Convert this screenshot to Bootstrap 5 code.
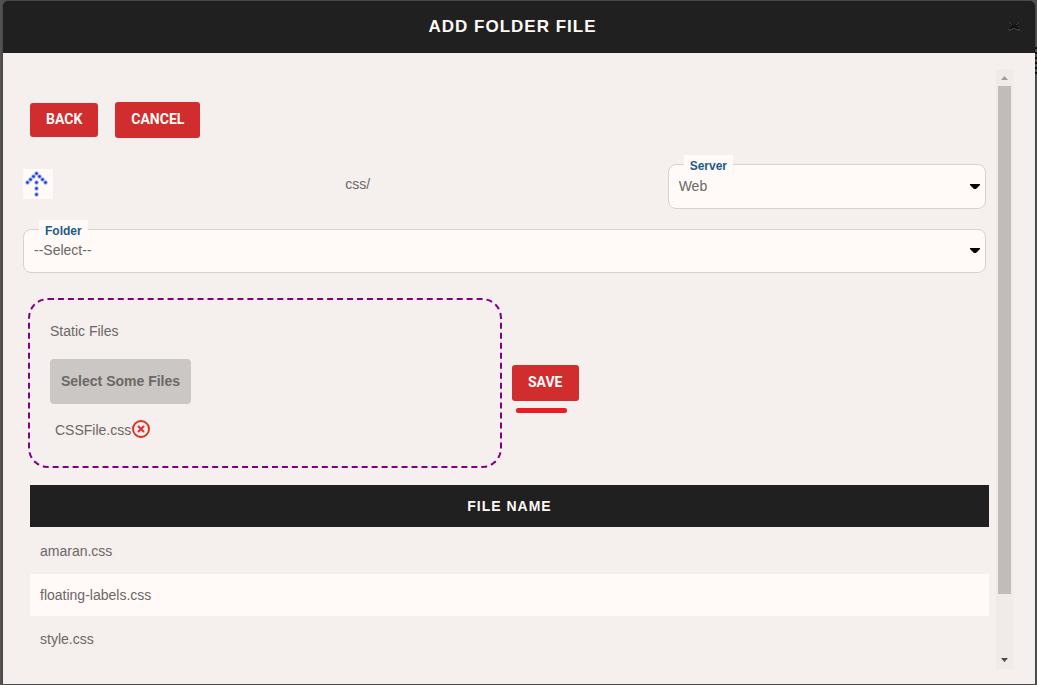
<!DOCTYPE html>
<html lang="en">
<head>
<meta charset="utf-8">
<meta name="viewport" content="width=device-width, initial-scale=1">
<title>Add Folder File</title>
<link href="https://cdn.jsdelivr.net/npm/bootstrap@5.3.0/dist/css/bootstrap.min.css" rel="stylesheet">
<style>
body{font-family:"Liberation Sans",Arial,sans-serif;font-size:14px;line-height:20px;color:#6b6766;background:#555352}
.page-shell{min-height:100vh;padding:1px 2px 1px 3px;background:repeating-linear-gradient(#111 0 2px,#555352 2px 5px) right 47px/2px 30px no-repeat,#555352}
.dialog-box{background:#f5efed;border-radius:4px 4px 0 0;box-shadow:0 0 2px rgba(0,0,0,.5)}
.dialog-head{background:#202020;color:#fffaf7;height:52px;padding-right:13px;border-radius:4px 4px 0 0}
.dialog-head h1{font-size:17px;line-height:20px;font-weight:700;letter-spacing:1px}
.close-btn{right:14px;top:18px;width:14px;height:16px}
.dialog-main{padding:16px 22px 15px 20px}
.scroll-pane{padding-right:10px}
.btn-action{--bs-btn-color:#fffaf7;--bs-btn-bg:#d12c2e;--bs-btn-hover-color:#fff;--bs-btn-hover-bg:#b52325;--bs-btn-border-width:0;--bs-btn-border-radius:3px;--bs-btn-font-size:14px;--bs-btn-font-weight:700;--bs-btn-line-height:20px;padding:7px 16px 9px;font-family:Roboto,sans-serif}
.btn-short{padding:6px 16px 8px}
.action-bar{padding:33px 7px 0;gap:17px}
.path-row{margin-top:26px}
.up-btn{width:30px;height:30px;background:#fffaf7;margin-top:5px}
.path-text{margin-top:10px}
.field-select{height:45px;padding:10px 30px 12px 10px;font-size:14px;line-height:20px;color:#6b6766;background:#fffaf7;border:1px solid #d8d3d1;border-radius:8px}
.folder-row .field-select{height:44px}
.folder-row .field-caret{top:19px}
.field-label{left:16px;top:-9px;padding:3px 6px 0;font-size:12px;line-height:16px;font-weight:700;color:#1d5a8a;background:#fffaf7}
.field-caret{right:6px;top:20px;width:10px;height:6px;pointer-events:none}
.folder-row{margin-top:20px}
.upload-row{margin-top:25px;padding-left:5px;gap:10px}
.drop-zone{width:calc(50% - 5px);height:170px;border:2px dashed purple;border-radius:20px;padding:21px 20px}
.btn-files{--bs-btn-color:#6b6766;--bs-btn-bg:#cbc7c4;--bs-btn-hover-bg:#bdb9b6;--bs-btn-border-width:0;--bs-btn-border-radius:4px;--bs-btn-padding-x:11px;--bs-btn-padding-y:12px;--bs-btn-font-size:14px;--bs-btn-font-weight:700;--bs-btn-line-height:21px;margin-top:18px}
.file-entry{margin-top:16px;padding-left:5px}
.save-mark{left:4px;top:43px;width:51px;height:5px;border-radius:2px;background:#ed1c24}
.file-table{width:calc(100% - 4px);margin:17px 0 0 7px;border-collapse:separate;border-spacing:0}
.file-table th{height:42px;background:#202020;color:#fffaf7;text-align:center;letter-spacing:1px}
.file-table td{height:44px;padding:0 10px;border-top:2px solid #f5efed}
.file-table tbody tr:nth-child(even) td{background:#fffaf7}
.file-table tbody tr:first-child td{height:45px}
.scroll-track{width:17px;background:#f0ebe8}
.scroll-thumb{width:13px;flex:0 0 508px;background:#c1bcb9}
.scroll-arrow{height:17px;width:17px}
</style>
</head>
<body>
<div class="page-shell d-flex flex-column">
<div class="dialog-box flex-grow-1 d-flex flex-column" role="dialog" aria-labelledby="dialogTitle">
  <header class="dialog-head position-relative d-flex align-items-center justify-content-center">
    <h1 class="m-0 text-uppercase" id="dialogTitle">Add Folder File</h1>
    <button type="button" class="close-btn position-absolute border-0 bg-transparent p-0 d-flex" aria-label="Close">
      <svg width="14" height="16" viewBox="0 0 14 16" fill="none"><path d="M3 4l3 3h2l3-3M3 10l3-2h2l3 2" stroke="#111" stroke-width="2"/><path d="M2 3l3 3M12 3L9 6M1 10l1 1h2l3-2 3 2h2l1-1" stroke="#484848" stroke-width="1"/></svg>
    </button>
  </header>
  <div class="dialog-main flex-grow-1 d-flex">
    <main class="scroll-pane flex-grow-1">
      <div class="action-bar d-flex align-items-center">
        <button type="button" class="btn btn-action btn-short">BACK</button>
        <button type="button" class="btn btn-action">CANCEL</button>
      </div>
      <div class="path-row row gx-1">
        <div class="col-4">
          <button type="button" class="up-btn border-0 p-0 d-block" aria-label="Up one folder">
            <svg class="d-block" width="30" height="30" viewBox="0 0 30 30"><g fill="#6d8ae4" opacity=".65"><circle cx="13.5" cy="4.500" r="2.200"/><circle cx="10.500" cy="7.500" r="2.200"/><circle cx="7.500" cy="10.500" r="2.200"/><circle cx="4.500" cy="13.500" r="2.200"/><circle cx="16.500" cy="7.500" r="2.200"/><circle cx="19.500" cy="10.500" r="2.200"/><circle cx="22.500" cy="13.500" r="2.200"/><circle cx="13.500" cy="13.500" r="2.200"/><circle cx="13.500" cy="19.500" r="2.200"/><circle cx="13.500" cy="25.500" r="2.200"/></g><g fill="#1237cf"><circle cx="13.500" cy="4.500" r="1.200"/><circle cx="10.500" cy="7.500" r="1.200"/><circle cx="7.500" cy="10.500" r="1.200"/><circle cx="4.500" cy="13.500" r="1.200"/><circle cx="16.500" cy="7.500" r="1.200"/><circle cx="19.500" cy="10.500" r="1.200"/><circle cx="22.500" cy="13.500" r="1.200"/><circle cx="13.500" cy="13.500" r="1.200"/><circle cx="13.500" cy="19.500" r="1.200"/><circle cx="13.500" cy="25.500" r="1.200"/></g></svg>
          </button>
        </div>
        <div class="col-4"><div class="path-text">css/</div></div>
        <div class="col-4">
          <div class="position-relative">
            <select class="field-select form-select" id="server"><option>Web</option></select>
            <label class="field-label position-absolute" for="server">Server</label>
            <svg class="field-caret position-absolute" viewBox="0 0 10 6"><path d="M0 0h10v1L6 5H4L0 1z"/></svg>
          </div>
        </div>
      </div>
      <div class="folder-row position-relative">
        <select class="field-select form-select" id="folder"><option>--Select--</option></select>
        <label class="field-label position-absolute" for="folder">Folder</label>
        <svg class="field-caret position-absolute" viewBox="0 0 10 6"><path d="M0 0h10v1L6 5H4L0 1z"/></svg>
      </div>
      <div class="upload-row d-flex align-items-center">
        <div class="drop-zone">
          <div>Static Files</div>
          <button type="button" class="btn btn-files">Select Some Files</button>
          <div class="file-entry d-flex align-items-center">
            <span>CSSFile.css</span>
            <button type="button" class="border-0 bg-transparent p-0 d-flex" aria-label="Remove CSSFile.css">
              <svg width="20" height="20" viewBox="0 0 20 20" fill="none" stroke="#dc3424"><circle cx="10" cy="9" r="8" stroke-width="2"/><path d="M7 6l6 6M13 6l-6 6" stroke-width="2"/></svg>
            </button>
          </div>
        </div>
        <div class="position-relative">
          <button type="button" class="btn btn-action">SAVE</button>
          <span class="save-mark position-absolute"></span>
        </div>
      </div>
      <table class="file-table">
        <thead><tr><th scope="col">FILE NAME</th></tr></thead>
        <tbody>
          <tr><td>amaran.css</td></tr>
          <tr><td>floating-labels.css</td></tr>
          <tr><td>style.css</td></tr>
        </tbody>
      </table>
    </main>
    <div class="scroll-track d-flex flex-column align-items-center" aria-hidden="true">
      <svg class="scroll-arrow flex-shrink-0" viewBox="0 0 17 17"><path d="M5 11L8.500 7 12 11z" fill="#a09c9a"/></svg>
      <div class="scroll-thumb"></div>
      <svg class="scroll-arrow mt-auto flex-shrink-0" viewBox="0 0 17 17"><path d="M5 6h7L8.500 10z" fill="#4d4a49"/></svg>
    </div>
  </div>
</div>
</div>
<script src="https://cdn.jsdelivr.net/npm/bootstrap@5.3.0/dist/js/bootstrap.bundle.min.js"></script>
</body>
</html>
